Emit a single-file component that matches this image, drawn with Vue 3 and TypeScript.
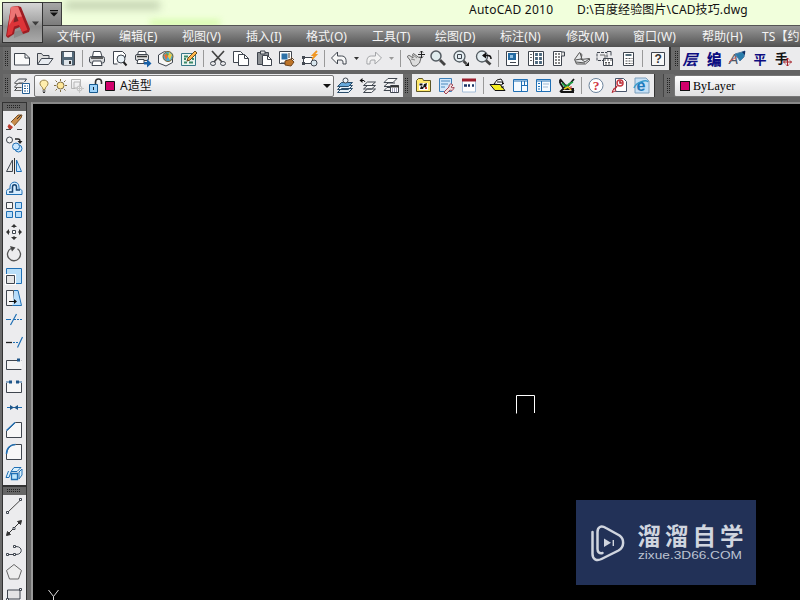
<script setup lang="ts">
type Entry = string

const menus: string[] = ['文件(F)', '编辑(E)', '视图(V)', '插入(I)', '格式(O)', '工具(T)', '绘图(D)', '标注(N)', '修改(M)', '窗口(W)', '帮助(H)', 'TS【约']

const standard: Entry[] = [
  'new', 'open', 'save', '|', 'print', 'preview', 'publish', 'dwf', 'markup', '|',
  'cut', 'copy', 'paste', 'match', 'block', '|', 'undo', 'v', 'redo', 'w', '|',
  'pan', 'zoom', 'zoomWindow', 'zoomPrev', '|',
  'props', 'center', 'palettes', 'sheets', 'markupSet', 'calc', '|', 'help',
]
const layerTools: Entry[] = ['layerMake', 'layerPrev', 'layerState']
const express: Entry[] = ['folderPic', 'sheetEdit', 'table', '|', 'folderY', 'paneR', 'paneL', 'chart', '|', 'ask', 'pdf', 'web']
const custom: Entry[] = ['ceng', 'bian', 'brushA', 'ping', 'pingRed']
const modify: Entry[] = ['erase', 'copyObj', 'mirror', 'offset', 'array', 'move', 'rotate', 'scale', 'stretch', 'trim', 'extend', 'breakAt', 'break', 'join', 'chamfer', 'fillet', 'explode']
const draw: Entry[] = ['line', 'xline', 'pline', 'polygon', 'rect']

const K = 'stroke="#3f454e"'
const B = 'stroke="#1f6fb4"'

const icons: Record<string, string> = {
  new: `<path d="M3.500 6.500h10.500l4.500 4.500v7h-15z" fill="#fafafa" ${K}/><path d="M14 6.500v4.500h4.500" ${K}/>`,
  open: `<path d="M3.500 17V6.500h4l1.500 2h6v3" fill="#ddd" ${K}/><path d="M3.500 17.500l4-6h11.500l-4.500 6z" fill="#e9edf2" ${K}/>`,
  save: `<path d="M4.500 4.500h13v13.500h-12l-1-1z" fill="#536878" ${K}/><path d="M7 5h8v5H7z" fill="#f2f5f8"/><path d="M7 13h8v5H7z" fill="#dfe5ea"/><path d="M12 14h2v3h-2z" fill="#333"/>`,
  print: `<path d="M6.500 9.500l1-5h7l1.500 5" fill="#fff" ${K}/><rect x="3.500" y="9.500" width="15" height="6.500" rx="2" fill="#d9dbdd" ${K}/><path d="M5 11h12" stroke="#333" stroke-width="1.500"/><path d="M7 14l-1 4.500h10L15 14z" fill="#fff" ${K}/>`,
  preview: `<path d="M4.500 17V4.500h9l3 3v3M4.500 17h4" fill="#fff" ${K}/><circle cx="12" cy="12" r="4" fill="#e8f1f7" ${K}/><path d="M14.500 15l3 3.500" stroke="#222" stroke-width="2"/>`,
  publish: `<path d="M5.500 8l1-3.500h7l1 3.500" fill="#fff" ${K}/><rect x="3.500" y="7.500" width="13" height="6" rx="1.500" fill="#ddd" ${K}/><path d="M5 9.500h10" stroke="#333" stroke-width="1.500"/><path d="M6 12.500h6v4H5z" fill="#fff" ${K}/><path d="M12 15h3v-3l4.500 4.500-4.500 4v-3h-3z" fill="#1860a8"/>`,
  dwf: `<path d="M3.500 8l6-3.500 8 3v8L11 19l-7.500-3z" fill="#f7f7f7" ${K}/><circle cx="13" cy="9.500" r="5" fill="#4aacd8" stroke="#77602c"/><path d="M9 8l3-2 1 3-2 4z" fill="#ef6a32"/><path d="M14 5l3 3-2 5-2-3z" fill="#f2cc44"/><path d="M11 6l3 1-2 2z" fill="#60a745"/>`,
  markup: `<path d="M3.500 6.500h14v12h-14z" fill="#eaf4ef" stroke="#387888"/><path d="M6 9.500h4M6 12h2M6 15.500h3M11 15.500h4M14 12h2" stroke="#3c8a6a" stroke-width="2"/><path d="M9 14l1-3 7-7 2 2-7 7z" fill="#ffb84d" stroke="#6b4b1e"/>`,
  cut: `<path d="M5 4l10 11M17 4L7 15" stroke="#444" stroke-width="1.700"/><ellipse cx="6" cy="16.500" rx="2.500" ry="2" ${K}/><ellipse cx="16" cy="16.500" rx="2.500" ry="2" ${K}/>`,
  copy: `<path d="M3.500 4.500h7l3 3v8h-10z" fill="#fff" ${K}/><path d="M8.500 7.500h6l4 4v7h-10z" fill="#fff" ${K}/><path d="M14.500 7.500v4h4" ${K}/>`,
  paste: `<path d="M4.500 5.500h11v12h-11z" fill="#8b8f93" ${K}/><path d="M7.500 4h4.500v3H7.500z" fill="#ddd" ${K}/><path d="M9.500 8.500h5l4 4v6h-9z" fill="#fff" ${K}/><path d="M14.500 8.500v4h4" ${K}/>`,
  match: `<path d="M3.500 4.500h12v12h-12z" fill="#fff" ${K}/><path d="M5.500 6.500h6v6h-6z" fill="#2d71a8"/><path d="M13 6v5" stroke="#333"/><path d="M15 10l3 3M9 14l6-2 3 3-3 4-6-1z" fill="#bd7428" stroke="#71451c"/><path d="M5 16h4" ${K}/>`,
  block: `<path d="M4.500 10.500h9v6h-9z" fill="#fff" ${K}/><circle cx="15" cy="16" r="3" fill="#d9e6ed" ${K}/><path d="M3 9h3v3H3zM3 15h3v3H3z" fill="#444a52"/><path d="M18 4l-4 4h3l-4 4" stroke="#f19722" stroke-width="1.800"/>`,
  undo: `<path d="M3.500 11l6-6v4h4c4 0 5 3 4.500 8h-3c0-3 0-4-2-4H9.500v4z" fill="#f7f7f7" ${K}/>`,
  redo: `<path d="M18.500 11l-6-6v4h-4c-4 0-5 3-4.500 8h3c0-3 0-4 2-4h3v4z" fill="#f3f3f3" stroke="#a3a5a8"/>`,
  v: `<path d="M3 10h5l-2.500 3z" fill="#333"/>`,
  w: `<path d="M3 10h5l-2.500 3z" fill="#999"/>`,
  pan: `<path d="M3.500 10c0-2 2-2 3.500-.5l2 1.500c0-2-1-4 .5-4.500l4.500 3.500 3 1-1.500 5-3.500 3H9c-2-2-2-4-3-6z" fill="#ddd" stroke="#666"/><path d="M7 12l4 1M9 8l4 3" stroke="#888"/><path d="M17.500 4v7M14 7.500h7M16 5.500l1.500-1.500L19 5.500M16 9.500l1.500 1.500L19 9.500" stroke="#222"/>`,
  zoom: `<circle cx="9" cy="9" r="5" fill="#dfecee" stroke="#535b61" stroke-width="1.500"/><path d="M13 13l5 5" stroke="#444" stroke-width="2.800"/>`,
  zoomWindow: `<circle cx="9.500" cy="9.500" r="5.500" fill="#e4edf1" stroke="#535b61" stroke-width="1.300"/><path d="M7.500 7.500h4v4h-4z" ${K}/><path d="M13.500 14l3 3" stroke="#444" stroke-width="2.500"/><path d="M19 15v4h-4z" fill="#111"/>`,
  zoomPrev: `<circle cx="9" cy="9.500" r="5.500" fill="#e4edf1" stroke="#535b61" stroke-width="1.300"/><path d="M13 13.500l4.500 4" stroke="#444" stroke-width="2.800"/><path d="M10 8.500h5c2 0 3 1 3 3.500" stroke="#111" stroke-width="1.500"/><path d="M13 5.500v6L9 8.500z" fill="#111"/>`,
  props: `<path d="M4.500 4.500h12v14h-12z" fill="#fff" ${K}/><path d="M6 6h8v7H6z" fill="#246aa1"/><path d="M8 8h3v3H8z" fill="#8fc0e4"/><path d="M15 6v1M8 15.500h6" ${K}/>`,
  center: `<path d="M3.500 4.500h15v14h-15z" fill="#fff" ${K}/><path d="M8.500 5v13" ${K}/><path d="M5 7.500h2M5 10.500h2M5 13.500h2" stroke="#666"/><path d="M11.500 6v11M15.500 6v11" stroke="#4a657a" stroke-width="2.800" stroke-dasharray="3 1"/>`,
  palettes: `<path d="M5.500 4.500h8v14h-8z" fill="#fff" ${K}/><path d="M13.500 5h3v4h-3" fill="#ddd" ${K}/><path d="M8 6v11M11 6v11" stroke="#888" stroke-width="2" stroke-dasharray="2 1"/>`,
  sheets: `<path d="M3.500 12.500l5-7 2.500 2-1 5 8.500-1v2l-4 3.500h-9z" fill="#e6e8ea" stroke="#555"/><path d="M4 13l6-1 4 3 4-3M9 6l2 6M5 15l9 1" stroke="#555"/>`,
  markupSet: `<path d="M3 5.500h10v8H3z" ${K} stroke-dasharray="3 1"/><path d="M6 8h5v3" stroke="#666"/><path d="M13 4.500h4v4" ${K}/><path d="M9.500 11.500h9v7h-9z" fill="#fff" ${K}/><path d="M10 13h8M11 15.500h6M11 17h6" stroke="#555" stroke-dasharray="2 1"/>`,
  calc: `<path d="M6.500 5.500h10v13h-10z" fill="#fff" ${K}/><path d="M8.500 8h6" stroke="#556b78" stroke-width="2"/><path d="M8.500 11.500h7M8.500 14h7M8.500 16.500h7" stroke="#555" stroke-dasharray="2 1"/>`,
  help: `<path d="M5.500 5.500h13v13h-13z" fill="#f7f7f7" ${K}/><text x="8.500" y="16.300" font-family="Liberation Sans" font-weight="bold" font-size="12" fill="#333">?</text>`,
  layerMgr: `<path d="M3.500 9l4-4h8l-2 3M3.500 13l4-4h5M3.500 16.500l3-3h4" ${K}/><path d="M3.500 9.500h8M3.500 13.500h6M3.500 16.500h7" stroke="#666"/><path d="M11.500 9.500h7v10h-7z" fill="#fff" stroke="#245f94"/><path d="M13 12h4M13 14.500h4M13 17h4" stroke="#245f94" stroke-dasharray="2 1"/>`,
  layerMake: `<g fill="#e8f1f8" stroke="#294c6a"><path d="M3.500 18.500l4-4h11l-4 4zM3.500 15.500l4-4h11l-4 4z"/><path d="M3.500 12.500l4-4h11l-4 4z" fill="#66a8da"/></g><circle cx="11.500" cy="6.500" r="2.500" fill="#edf4fa" ${K}/>`,
  layerPrev: `<g fill="#f4f4f4" ${K}><path d="M6.500 18.500l4-3.500h8l-4 3.500zM6.500 15l4-3.500h8l-4 3.500zM6.500 11.500l4-3.500h8l-4 3.500z"/></g><path d="M4 6.500h3l1 1.500" stroke="#111"/><path d="M2.500 6.500l3-2.500v5z" fill="#111"/>`,
  layerState: `<path d="M4 8.500l4-4h9l-4 4zM4 12.500l4-3.500h7M4 16.500l3-3h4M4 12.500h6M4 16.500h6" fill="#fafafa" ${K}/><path d="M10.500 11.500h8v7h-8z" fill="#fff" ${K}/><path d="M11 12.500h8" stroke="#333" stroke-width="2"/><path d="M12 15h5M12 17h5" stroke="#447" stroke-dasharray="1 1"/>`,
  folderPic: `<path d="M4.500 6.500l2-2h4l1 2h7v11h-14z" fill="#ffe86b" stroke="#5c5525"/><path d="M7 9h9v7H7z" fill="#fff"/><path d="M8 15l1-3 2 1 1-3 3-1-1 5-2-1-1 2z" fill="#151515"/><path d="M7.500 10.500h3" stroke="#111" stroke-width="2"/><path d="M13 14h2" stroke="#b33" stroke-width="2"/>`,
  sheetEdit: `<path d="M4.500 4.500h12v13h-12z" fill="#d2e7fb" stroke="#3c7fb8"/><path d="M6 7h9M6 10h7M6 13h4" stroke="#4a88bd"/><path d="M9 18l5-5c0-3 2-4 4-2l-2 2 2 1 1-1c0 3-2 4-4 3l-4 4z" fill="#f2dada" stroke="#a34656"/>`,
  table: `<path d="M4.500 7v11h13V7" fill="#fff" stroke="#a3bcd8"/><path d="M4 6h14" stroke="#9b1d2c" stroke-width="3"/><path d="M6 11.500h3M10 11.500h2M14 11.500h2" stroke="#1b3566" stroke-width="2.500"/>`,
  folderY: `<path d="M7 10l3-4 4-1 2 3-1 3z" fill="#fff" stroke="#111"/><path d="M3 10.500h10l5 6H8z" fill="#f4ed20" stroke="#111"/><path d="M10 8h5l2 2M14 13h3" stroke="#111"/>`,
  paneR: `<path d="M3.500 5.500h14v12h-14z" fill="#f4faff" ${B}/><path d="M4 7h13M11.500 7v10M11.500 11.500h6M14.500 7v4" ${B}/>`,
  paneL: `<path d="M3.500 5.500h14v12h-14z" fill="#f4faff" ${B}/><path d="M4 7h13M8.500 7v10" ${B}/><path d="M5 9.500h2M5 12.500h2M5 15h2" ${B}/><path d="M10 10h6M10 13h5" stroke="#9fb9d2"/>`,
  chart: `<path d="M4 5l5 6 3 1 6-7M4 18l6-6 8 5M4 9l4 6h10M5 18h13M4 6v3" stroke="#151515" stroke-width="1.800"/><path d="M6 9l4 4 3-3 4-2" stroke="#1da445" stroke-width="1.600"/><path d="M8 15l4-2 3 3" stroke="#e5c71c" stroke-width="1.600"/><path d="M15 12v3" stroke="#d33"/>`,
  ask: `<circle cx="11" cy="11.500" r="7" fill="#fff" stroke="#6a829b"/><text x="7.800" y="16" font-family="Liberation Serif" font-weight="bold" font-size="13.500" fill="#d23a46">?</text>`,
  pdf: `<path d="M7.500 4.500h8l3 3v10h-11z" fill="#fff" stroke="#49556b"/><circle cx="12" cy="9" r="3" stroke="#c53740" stroke-width="1.500"/><path d="M5 17l4-5M12 7v2h2" stroke="#b22732" stroke-width="1.600"/><path d="M4 18.500l2-4 2 2z" fill="#fff" stroke="#b22732"/>`,
  web: `<path d="M4 4h11l3 3v12H4z" fill="#c4dff5" stroke="#7d9fbc"/><text x="5.500" y="17" font-family="Liberation Sans" font-weight="bold" font-size="16" fill="#2079bb">e</text><path d="M3 14c2-6 13-9 14-6" stroke="#389bcc" stroke-width="1.500"/>`,
  ceng: `<text x="2.500" y="17.500" font-family="Noto Sans CJK SC" font-style="italic" font-weight="700" font-size="15" fill="#0c0c80">层</text>`,
  bian: `<text x="4" y="17.500" font-family="Noto Sans CJK SC" font-weight="900" font-size="14.500" fill="#0c0c80">编</text>`,
  brushA: `<text x="3" y="17" font-family="Liberation Sans" font-style="italic" font-size="14" fill="#4a5666">A</text><path d="M3 15l10-7" stroke="#c55"/><path d="M9 7l7-2 3-1-1 6-4 4-2-3z" fill="#287cab" stroke="#4f7ea6"/><path d="M16 5l3-1v4z" fill="#102b60"/>`,
  ping: `<text x="4.500" y="17" font-family="Noto Sans CJK SC" font-weight="700" font-size="13" fill="#0c0c80">平</text>`,
  pingRed: `<text x="3" y="16" font-family="Noto Sans CJK SC" font-weight="700" font-size="13" fill="#111">手</text><path d="M15.500 11v8M11.500 15h8M14 12.500l1.500-1.500 1.500 1.500M14 17.500l1.500 1.500 1.500-1.500M13 13.500L11.500 15l1.500 1.500M18 13.500l1.500 1.500-1.500 1.500" stroke="#a5222b"/>`,
  erase: `<path d="M4 18.500h5M15 18.500h5" stroke="#444"/><path d="M9 11l7-7h4l-1 3-7 8z" fill="#c98d4c" stroke="#795126"/><path d="M15 8l4-4" stroke="#333"/><path d="M8.500 12l3 3.500" stroke="#f4f4f4" stroke-width="2.500"/><path d="M7 13l4 3-1.500 2H7l-1.500-2.500z" fill="#ba3b2d"/>`,
  copyObj: `<circle cx="7.500" cy="7" r="3" fill="#f5f5f5" ${K}/><path d="M13 6h3c1.500 0 2 .5 2 2" stroke="#222" stroke-width="1.300"/><path d="M15.500 8h5L18 11z" fill="#222"/><g fill="#c9e7ff" ${B}><circle cx="16.500" cy="15.500" r="3.500"/><circle cx="14" cy="13.500" r="3.500"/></g>`,
  mirror: `<path d="M10.500 5v11.500h-6z" fill="#e6e6e6" ${K}/><path d="M14.500 5v11.500h5z" fill="#c8e6ff" ${B}/><path d="M12.500 3v16" stroke="#333"/>`,
  offset: `<path d="M4.500 17.500v-3c0-1.500 1-2.500 3.500-2.500v-2c0-6.500 9-6.500 9 0v2c2 0 3 1 3 2.500v3z" fill="#d7edff" ${B}/><path d="M7 15h3.500v-5c0-3 4-3 4 0v3H18" stroke="#174471" stroke-width="1.500"/>`,
  array: `<path d="M4.500 3.500h6v6h-6z" fill="#f7f7f7" ${K}/><path d="M13.500 3.500h6v6h-6zM4.500 12.500h6v6h-6zM13.500 12.500h6v6h-6z" fill="#b9defb" ${B}/>`,
  move: `<path d="M10.500 9.500h3v3h-3z" fill="#fff" ${K}/><g fill="#333"><path d="M12 3l3 3H9zM12 19l3-3H9zM4 11l3-3v6zM20 11l-3-3v6z"/><path d="M11.500 5h1v2h-1zM11.500 15h1v2h-1zM6 10.500h2v1H6zM16 10.500h2v1h-2z"/></g>`,
  rotate: `<path d="M9 5.500a6.500 6.500 0 1 0 6.500.3" stroke="#555" stroke-width="1.300"/><path d="M8 3l5.500 1.500L10 8.500z" fill="#444"/>`,
  scale: `<path d="M4.500 3.500h15v15h-15z" fill="#badff8" ${B}/><path d="M4.500 10.500h8v8h-8z" fill="#e9e9e9" stroke="#fff" stroke-width="3"/><path d="M4.500 10.500h8v8h-8z" fill="#e6e6e6" ${K}/>`,
  stretch: `<path d="M4.500 3.500h7v15h-7z" fill="#f5f5f5" ${K}/><path d="M12 3.500h4l3.500 15h-9" fill="#b9defb" ${B}/><path d="M7 14h5v-2l3 2.500-3 2.500v-2H7z" fill="#111"/>`,
  trim: `<path d="M4 10.500h5M12 10.500h2M15 10.500h2M18 10.500h2M8.500 16L14.500 5" ${B} stroke-width="1.200"/>`,
  extend: `<path d="M4 11.500h6" stroke="#222" stroke-width="1.300"/><path d="M11 11.500h2M14 11.500h2M15.500 16.500l5-10.500" ${B} stroke-width="1.200"/>`,
  breakAt: `<path d="M19.500 7.500v9h-15v-9H15" fill="#f3f3f3" ${K}/><path d="M19.500 7.500v9" stroke="#f3f3f3"/><path d="M15 5.500h3v3h-3z" fill="#1e5689"/>`,
  break: `<path d="M4.500 8v9.500h15V8" fill="#f7f7f7" ${K}/><path d="M4 7h5M15 7h5" stroke="#28649a"/><path d="M7 5.500h3v3H7zM14 5.500h3v3h-3z" fill="#1e5689"/>`,
  join: `<path d="M5 10.500h15" ${B}/><path d="M8 8l4 2.500L8 13zM16 8l-4 2.500 4 2.500z" fill="#1e5689"/>`,
  chamfer: `<path d="M4.500 12v6.500h15v-15h-6z" fill="#f7f7f7" ${K}/><path d="M4.500 11.500l8.500-8" ${B} stroke-width="1.300"/>`,
  fillet: `<path d="M4.500 12v6.500h15v-15h-6c-5 0-8 4-9 8.500" fill="#f7f7f7" ${K}/><path d="M4.500 13c0-6 4-9.500 9-9.500" ${B} stroke-width="1.500"/>`,
  explode: `<path d="M9 8.500l3-4h7l-4 4zM6.500 8l-2.500 6.500h3L9 9M17 9l3-3v6l-3 4z" fill="#d8f0fd" ${B}/><path d="M9.500 10.500h6v6h-6z" fill="#bce6fc" ${B} stroke-width="1.300"/>`,
  line: `<path d="M6 17L18.500 5" stroke="#444"/><path d="M4.500 16.500h2v2h-2zM17.500 3.500h2v2h-2z" fill="#fff" ${K}/>`,
  xline: `<path d="M5 18L19 4" stroke="#333"/><path d="M19.500 3.500l-4 1 3 3zM4.500 18.500l1-4 3 3z" fill="#333" stroke="#333"/><path d="M11 10.500h2v2h-2z" fill="#fff" ${K}/>`,
  pline: `<path d="M6 15.500h8c7 0 7-8 0-8h-2" ${K}/><path d="M4.500 14.500h2v2h-2zM11.500 14.500h2v2h-2zM11.500 6.500h2v2h-2z" fill="#fff" ${K}/>`,
  polygon: `<path d="M12 3.500l7.500 6-3 8.500h-9l-3-8.500z" fill="#ededed" stroke="#666"/>`,
  rect: `<path d="M5.500 7h12.500v9H5.500z" fill="#e4e4e6" ${K}/><path d="M4.500 15.500h2v2h-2zM17.500 5.500h2v2h-2z" fill="#fff" ${K}/>`,
}
</script>

<template>
  <div class="window">
    <header class="title">
      <i class="haze"></i><i class="tint"></i>
      <span class="app">AutoCAD 2010</span><span class="file">D:\百度经验图片\CAD技巧.dwg</span>
    </header>
    <nav class="menu"><span v-for="m in menus" :key="m">{{ m }}</span></nav>

    <button class="appbtn">
      <svg width="39" height="39" viewBox="0 0 39 39" fill="none">
        <path d="M11 29l10-3 3 4-13 5z" fill="#777" opacity=".5" />
        <path d="M8 4l7-1 3 1 9 22-1 3-6 2-3-7-5 2-1 5-6 4-2-2z" fill="#9d1c22" />
        <path d="M8 4l7-.5L24.500 27l-5.500 2-3-7-5 1.500L9 31l-5 2z" fill="#dd3438" />
        <path d="M8 4l7-.5 4 10-8 1-5 8z" fill="#f08a88" opacity=".75" />
        <path d="M12.500 10l3 8-5 1.500z" fill="#7b2528" />
        <path d="M29 18.500h7l-3.500 4z" fill="#3d3d3d" />
      </svg>
    </button>
    <button class="qat"><svg width="18" height="22" viewBox="0 0 18 22"><path d="M7 7h8v1.300H7zM7 9.500h8l-4 4z" fill="#111" /></svg></button>

    <div class="row">
      <i class="grip"></i>
      <div class="bar">
        <template v-for="(n, i) in standard" :key="i">
          <i v-if="n === '|'" class="sep"></i>
          <svg v-else-if="n === 'v' || n === 'w'" class="drop" viewBox="0 0 12 23" v-html="icons[n]" />
          <svg v-else class="ic" viewBox="0 0 23 23" fill="none" v-html="icons[n]" />
        </template>
      </div>
      <i class="grip second"></i>
      <div class="bar rest">
        <svg v-for="n in custom" :key="n" class="ic" viewBox="0 0 23 23" fill="none" v-html="icons[n]" />
      </div>
    </div>

    <div class="row lower">
      <i class="grip"></i>
      <div class="bar">
        <svg class="ic" viewBox="0 0 23 23" fill="none" v-html="icons.layerMgr" />
        <div class="combo layer">
          <svg width="82" height="20" viewBox="0 0 82 20" fill="none">
            <path d="M8 13.500c0-3-3-3-3-6 0-4.500 8-4.500 8 0 0 3-3 3-3 6z" fill="#ffeeae" stroke="#9a8347" />
            <path d="M7.500 15h3M8 16.500h2" stroke="#333" />
            <circle cx="25.500" cy="9.500" r="3.500" fill="#ffe798" stroke="#806e42" />
            <path d="M25.500 3v2M25.500 14v2M19 9.500h2M30 9.500h2M20.500 4.500L22 6M29 13l1.500 1.500M20.500 14.500L22 13M29 6l1.500-1.500" stroke="#806e42" />
            <path d="M36.500 3.500h9v9h-9zM39 6h6v6h-6z" stroke="#b5b5b5" /><circle cx="44.500" cy="12.500" r="2.500" fill="#eee" stroke="#bbb" /><path d="M44.500 8v9M40 12.500h9" stroke="#c6c6c6" />
            <path d="M54.500 8.500h8v8h-8z" fill="#9ed3fa" stroke="#16598f" /><path d="M60.500 8V6c0-4 6-4 6 0v2" stroke="#333" stroke-width="1.600" /><path d="M58.500 11v3" stroke="#123" />
            <path d="M70.500 5.500h9v9h-9z" fill="#d1006b" stroke="#111" />
          </svg>
          <span class="lname">A造型</span>
          <svg class="arrow" width="12" height="20" viewBox="0 0 12 20"><path d="M2 8h8l-4 4z" fill="#111" /></svg>
        </div>
        <svg v-for="n in layerTools" :key="n" class="ic" viewBox="0 0 23 23" fill="none" v-html="icons[n]" />
      </div>
      <i class="grip"></i>
      <div class="bar">
        <template v-for="(n, i) in express" :key="i">
          <i v-if="n === '|'" class="sep"></i>
          <svg v-else class="ic" viewBox="0 0 23 23" fill="none" v-html="icons[n]" />
        </template>
      </div>
      <i class="grip third"></i>
      <div class="combo color"><i class="swatch"></i><span>ByLayer</span></div>
    </div>

    <main class="work">
      <aside class="side">
        <i class="hgrip"></i>
        <div class="tools"><svg v-for="n in modify" :key="n" viewBox="0 0 24 22" fill="none" v-html="icons[n]" /></div>
        <i class="hgrip"></i>
        <div class="tools"><svg v-for="n in draw" :key="n" viewBox="0 0 24 22" fill="none" v-html="icons[n]" /></div>
      </aside>
      <section class="canvas">
        <svg class="drawing" width="767" height="496" viewBox="33 104 767 496" fill="none" stroke="#fff">
          <path d="M516.500 413.500v-18h18v17.500" />
          <path d="M48.500 590l5 6.500 5-6.500M53.500 596.500v4" stroke="#ddd" />
        </svg>
        <div class="mark">
          <svg width="180" height="85" viewBox="0 0 180 85" fill="none" stroke="#d0d5df">
            <path d="M16.500 32v22c0 5 4 7.500 9 5l17-8.500c6-3.500 6-11.500 1-15L30 28c-5-3-8.500-1-8.500 4v17c0 3 2 5 5 4" stroke-width="2.500" stroke-linecap="round" />
            <path d="M28 38.500l7 4.200-7 4.300z" fill="#d0d5df" stroke="none" /><path d="M37.300 40v6" stroke-width="1.400" />
            <text x="61.500" y="44.500" class="brand" textLength="106">溜溜自学</text>
            <text x="62" y="59.300" class="url" textLength="104" lengthAdjust="spacingAndGlyphs">zixue.3D66.COM</text>
          </svg>
        </div>
      </section>
    </main>
  </div>
</template>

<style>
body { margin: 0; overflow: hidden; }
</style>
<style scoped>
.window { position: relative; width: 800px; height: 600px; overflow: hidden; display: flex; flex-direction: column; background: #656565; font-family: "Noto Sans", "Noto Sans CJK SC", sans-serif; }
.window * { box-sizing: border-box; }
svg { display: block; flex: none; }
.title { position: relative; flex: none; height: 25px; background: #f1ffdc; padding-left: 469px; display: flex; align-items: flex-start; font-size: 12px; line-height: 19px; color: #111; white-space: pre; }
.app { width: 108px; letter-spacing: .25px; }
.file { letter-spacing: .13px; }
.haze { position: absolute; left: 65px; top: 2px; width: 95px; height: 7px; background: #b9c8a8; filter: blur(4px); }
.tint { position: absolute; left: 150px; top: 20px; width: 70px; height: 6px; background: #d5fba8; filter: blur(3px); }
.menu { flex: none; height: 22px; padding-left: 57px; display: grid; grid-template-columns: 62px 63px 64px 60px 66px 63px 65px 66px 67px 69px 60px 60px; border-top: 1px solid #555; background: linear-gradient(#989898, #888 25%, #606060 80%, #505050); color: #f4f4f4; font-size: 12px; line-height: 22px; letter-spacing: .1px; white-space: nowrap; position: relative; }
button { padding: 0; margin: 0; }
.appbtn { position: absolute; left: 2px; top: 2px; width: 41px; height: 41px; border: 1px solid #333; background: linear-gradient(#d5d5d5, #a9a9a9 45%, #8d8d8d 60%, #aaa); }
.qat { position: absolute; left: 43px; top: 2px; width: 19px; height: 24px; border: 1px solid #3c3c3c; border-left: 0; background: linear-gradient(#a6a6a6, #7c7c7c); }
.row { flex: none; height: 27px; padding: 0 0 4px 3px; display: flex; background: #646464; }
.lower { height: 28px; padding-bottom: 5px; }
.bar { display: flex; height: 23px; background: #ebebed; flex: none; }
.rest { flex: 1; }
.grip { flex: none; width: 8px; height: 23px; background: #6b6b6b; display: flex; }
.grip::before { content: ""; width: 5px; height: 15px; margin: 4px 1px; background: conic-gradient(#222 25%, transparent 0) 0 0 / 2px 2px; }
.second { width: 11px; padding-left: 2px; border-left: 2px solid #333; }
.lower .bar + .grip { width: 9px; }
.lower .third.grip { width: 20px; padding-left: 11px; background: linear-gradient(90deg, #333 1px, #646464 1px 9px, #444 9px 10px, #6b6b6b 10px); }
.ic { width: 23px; height: 23px; }
.drop { width: 12px; height: 23px; }
.sep { width: 6px; height: 17px; margin-top: 3px; background: linear-gradient(90deg, transparent 2px, #999 2px 3px, transparent 3px); }
.combo { display: flex; align-items: center; height: 22px; background: linear-gradient(#fff, #f0f0f1 40%, #e0e0e1); border: 1px solid #777; border-radius: 2px; }
.layer { width: 300px; margin-top: 1px; font-size: 12px; line-height: 18px; color: #111; }
.lname { margin-left: 3px; flex: 1; }
.arrow { margin-right: 0; }
.color { flex: 1; border-right: 0; border-radius: 2px 0 0 2px; padding-left: 5px; font: 12px/18px "Liberation Serif", serif; color: #000; letter-spacing: .05px; margin-top: 1px; }
.swatch { width: 10px; height: 10px; border: 1px solid #111; background: #d1006b; margin-right: 3px; }
.work { flex: 1; min-height: 0; display: flex; padding-left: 2px; background: #6b6b6b; }
.side { width: 25px; flex: none; display: flex; flex-direction: column; border-right: 1px solid #333; border-left: 1px solid #333; }
.hgrip { flex: none; height: 9px; border-top: 1px solid #333; background: #666; padding: 2px 3px; }
.hgrip::before { content: ""; display: block; width: 14px; height: 4px; background: conic-gradient(#222 25%, transparent 0) 0 0 / 2px 2px; }
.tools { background: #ececee; }
.tools svg { width: 24px; height: 22px; margin-left: -1px; }
.tools + .hgrip { height: 10px; border-top: 2px solid #333; }
.canvas { position: relative; flex: 1; margin-left: 4px; border-left: 2px solid #999; border-top: 2px solid #888; background: #000; overflow: hidden; }
.mark { position: absolute; left: 543px; top: 396px; background: #223157; }
.brand { font-family: "Noto Sans CJK SC", sans-serif; font-size: 23.500px; font-weight: 700; fill: #d0d5df; stroke: none; }
.url { font-family: "Liberation Sans", sans-serif; font-size: 10.500px; fill: #bcc3d2; stroke: none; }
</style>
